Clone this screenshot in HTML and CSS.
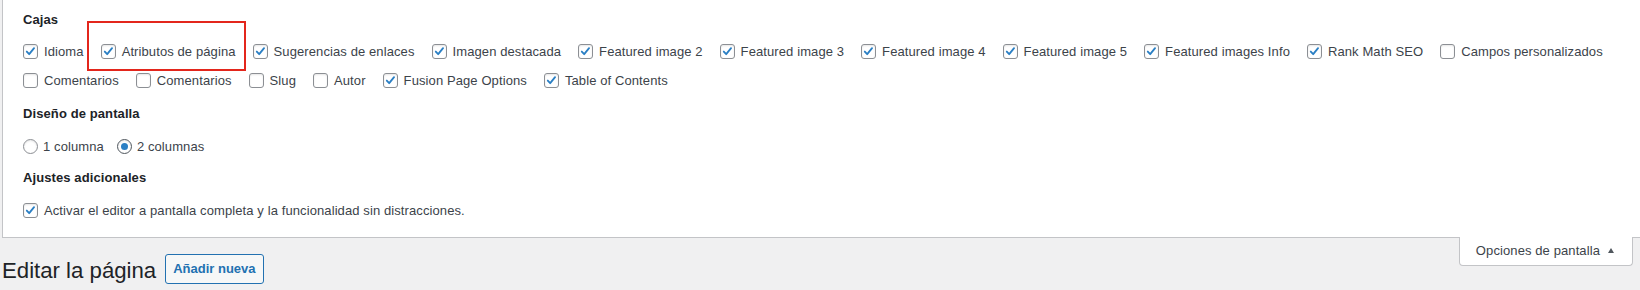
FILE: index.html
```html
<!DOCTYPE html>
<html lang="es">
<head>
<meta charset="utf-8">
<title>Editar la página</title>
<link rel="stylesheet" href="styles.css">
</head>
<body>
<div class="page">
  <div class="screen-meta">
    <div class="group">
      <div class="group-title">Cajas</div>
      <div class="opts">
        <label class="opt"><span class="cb"><svg viewBox="0 0 15 15"><polyline points="3.2,7.6 6,10.6 11.6,3.6"/></svg></span>Idioma</label>
        <label class="opt marked"><span class="cb"><svg viewBox="0 0 15 15"><polyline points="3.2,7.6 6,10.6 11.6,3.6"/></svg></span>Atributos de página</label>
        <label class="opt"><span class="cb"><svg viewBox="0 0 15 15"><polyline points="3.2,7.6 6,10.6 11.6,3.6"/></svg></span>Sugerencias de enlaces</label>
        <label class="opt"><span class="cb"><svg viewBox="0 0 15 15"><polyline points="3.2,7.6 6,10.6 11.6,3.6"/></svg></span>Imagen destacada</label>
        <label class="opt"><span class="cb"><svg viewBox="0 0 15 15"><polyline points="3.2,7.6 6,10.6 11.6,3.6"/></svg></span>Featured image 2</label>
        <label class="opt"><span class="cb"><svg viewBox="0 0 15 15"><polyline points="3.2,7.6 6,10.6 11.6,3.6"/></svg></span>Featured image 3</label>
        <label class="opt"><span class="cb"><svg viewBox="0 0 15 15"><polyline points="3.2,7.6 6,10.6 11.6,3.6"/></svg></span>Featured image 4</label>
        <label class="opt"><span class="cb"><svg viewBox="0 0 15 15"><polyline points="3.2,7.6 6,10.6 11.6,3.6"/></svg></span>Featured image 5</label>
        <label class="opt"><span class="cb"><svg viewBox="0 0 15 15"><polyline points="3.2,7.6 6,10.6 11.6,3.6"/></svg></span>Featured images Info</label>
        <label class="opt"><span class="cb"><svg viewBox="0 0 15 15"><polyline points="3.2,7.6 6,10.6 11.6,3.6"/></svg></span>Rank Math SEO</label>
        <label class="opt"><span class="cb"></span>Campos personalizados</label>
        <label class="opt"><span class="cb"></span>Comentarios</label>
        <label class="opt"><span class="cb"></span>Comentarios</label>
        <label class="opt"><span class="cb"></span>Slug</label>
        <label class="opt"><span class="cb"></span>Autor</label>
        <label class="opt"><span class="cb"><svg viewBox="0 0 15 15"><polyline points="3.2,7.6 6,10.6 11.6,3.6"/></svg></span>Fusion Page Options</label>
        <label class="opt"><span class="cb"><svg viewBox="0 0 15 15"><polyline points="3.2,7.6 6,10.6 11.6,3.6"/></svg></span>Table of Contents</label>
      </div>
    </div>
    <div class="group group-layout">
      <div class="group-title">Diseño de pantalla</div>
      <div class="opts">
        <label class="opt radio-opt"><span class="rb"></span>1 columna</label>
        <label class="opt radio-opt"><span class="rb on"></span>2 columnas</label>
      </div>
    </div>
    <div class="group group-extra">
      <div class="group-title">Ajustes adicionales</div>
      <div class="opts">
        <label class="opt"><span class="cb"><svg viewBox="0 0 15 15"><polyline points="3.2,7.6 6,10.6 11.6,3.6"/></svg></span>Activar el editor a pantalla completa y la funcionalidad sin distracciones.</label>
      </div>
    </div>
  </div>
  <div class="below">
    <div class="title-row">
      <h1 class="title">Editar la página</h1>
      <a class="add-btn">Añadir nueva</a>
    </div>
    <div class="tab">Opciones de pantalla<span class="arrow"></span></div>
  </div>
</div>
</body>
</html>
```
FILE: styles.css
```css
html, body {
  margin: 0;
  padding: 0;
}
body {
  background: #f0f0f1;
  font-family: "Liberation Sans", Arial, sans-serif;
  font-size: 13px;
  letter-spacing: 0.1px;
  color: #3c434a;
  overflow: hidden;
}
.page {
  padding-left: 2px;
}
.screen-meta {
  background: #fff;
  border-left: 1px solid #c3c4c7;
  border-bottom: 1px solid #c3c4c7;
  padding: 11px 0 12px 20px;
}
.group-title {
  font-weight: 700;
  color: #1d2327;
  line-height: 18px;
  margin-bottom: 8px;
}
.group-layout {
  margin-top: 10px;
}
.group-layout .group-title {
  margin-bottom: 9px;
}
.group-extra {
  margin-top: 8px;
}
.group-extra .group-title {
  margin-bottom: 9px;
}
.opts {
  display: flex;
  flex-wrap: wrap;
}
.opt {
  display: inline-flex;
  align-items: center;
  height: 29px;
  margin-right: 17px;
  white-space: nowrap;
}
.radio-opt {
  margin-right: 13px;
}
.marked {
  position: relative;
}
.marked::after {
  content: "";
  position: absolute;
  left: -14px;
  right: -10px;
  top: -16px;
  bottom: -5px;
  border: 2px solid #e3261c;
}
.cb {
  box-sizing: border-box;
  width: 15px;
  height: 15px;
  border: 1px solid #8c8f94;
  border-radius: 3px;
  margin-right: 6px;
  background: #fff;
  box-shadow: inset 0 1px 2px rgba(0, 0, 0, 0.1);
  display: flex;
  flex: none;
}
.cb svg {
  width: 13px;
  height: 13px;
  fill: none;
  stroke: #2a7fc4;
  stroke-width: 2.1;
  stroke-linecap: round;
  stroke-linejoin: round;
}
.rb {
  box-sizing: border-box;
  width: 15px;
  height: 15px;
  border: 1px solid #8c8f94;
  border-radius: 50%;
  margin-right: 5px;
  background: #fff;
  box-shadow: inset 0 1px 2px rgba(0, 0, 0, 0.1);
  display: flex;
  align-items: center;
  justify-content: center;
  flex: none;
}
.rb.on {
  border-color: #50575e;
}
.rb.on::before {
  content: "";
  width: 7px;
  height: 7px;
  border-radius: 50%;
  background: #2a7fc4;
}
.below {
  display: flex;
  justify-content: space-between;
  align-items: flex-start;
}
.title-row {
  display: flex;
  align-items: flex-start;
  margin-top: 16px;
}
.title {
  margin: 2px 0 0 0;
  font-size: 22.2px;
  font-weight: 400;
  line-height: 30px;
  letter-spacing: 0;
  color: #1d2327;
}
.add-btn {
  box-sizing: border-box;
  height: 30px;
  margin-left: 9px;
  padding: 0 7px;
  line-height: 28px;
  border: 1px solid #2271b1;
  border-radius: 3px;
  background: #f6f7f7;
  color: #2271b1;
  font-weight: 700;
  font-size: 13px;
  letter-spacing: 0;
}
.tab {
  margin-top: -1px;
  margin-right: 7px;
  box-sizing: border-box;
  height: 29px;
  padding: 0 18px 0 16px;
  line-height: 28px;
  background: #fff;
  border: 1px solid #c3c4c7;
  border-top: none;
  border-radius: 0 0 4px 4px;
  color: #3c434a;
  display: flex;
  align-items: center;
}
.arrow {
  width: 0;
  height: 0;
  margin-left: 8px;
  margin-top: -2px;
  border-left: 3.5px solid transparent;
  border-right: 3.5px solid transparent;
  border-bottom: 5px solid #50575e;
}
```
